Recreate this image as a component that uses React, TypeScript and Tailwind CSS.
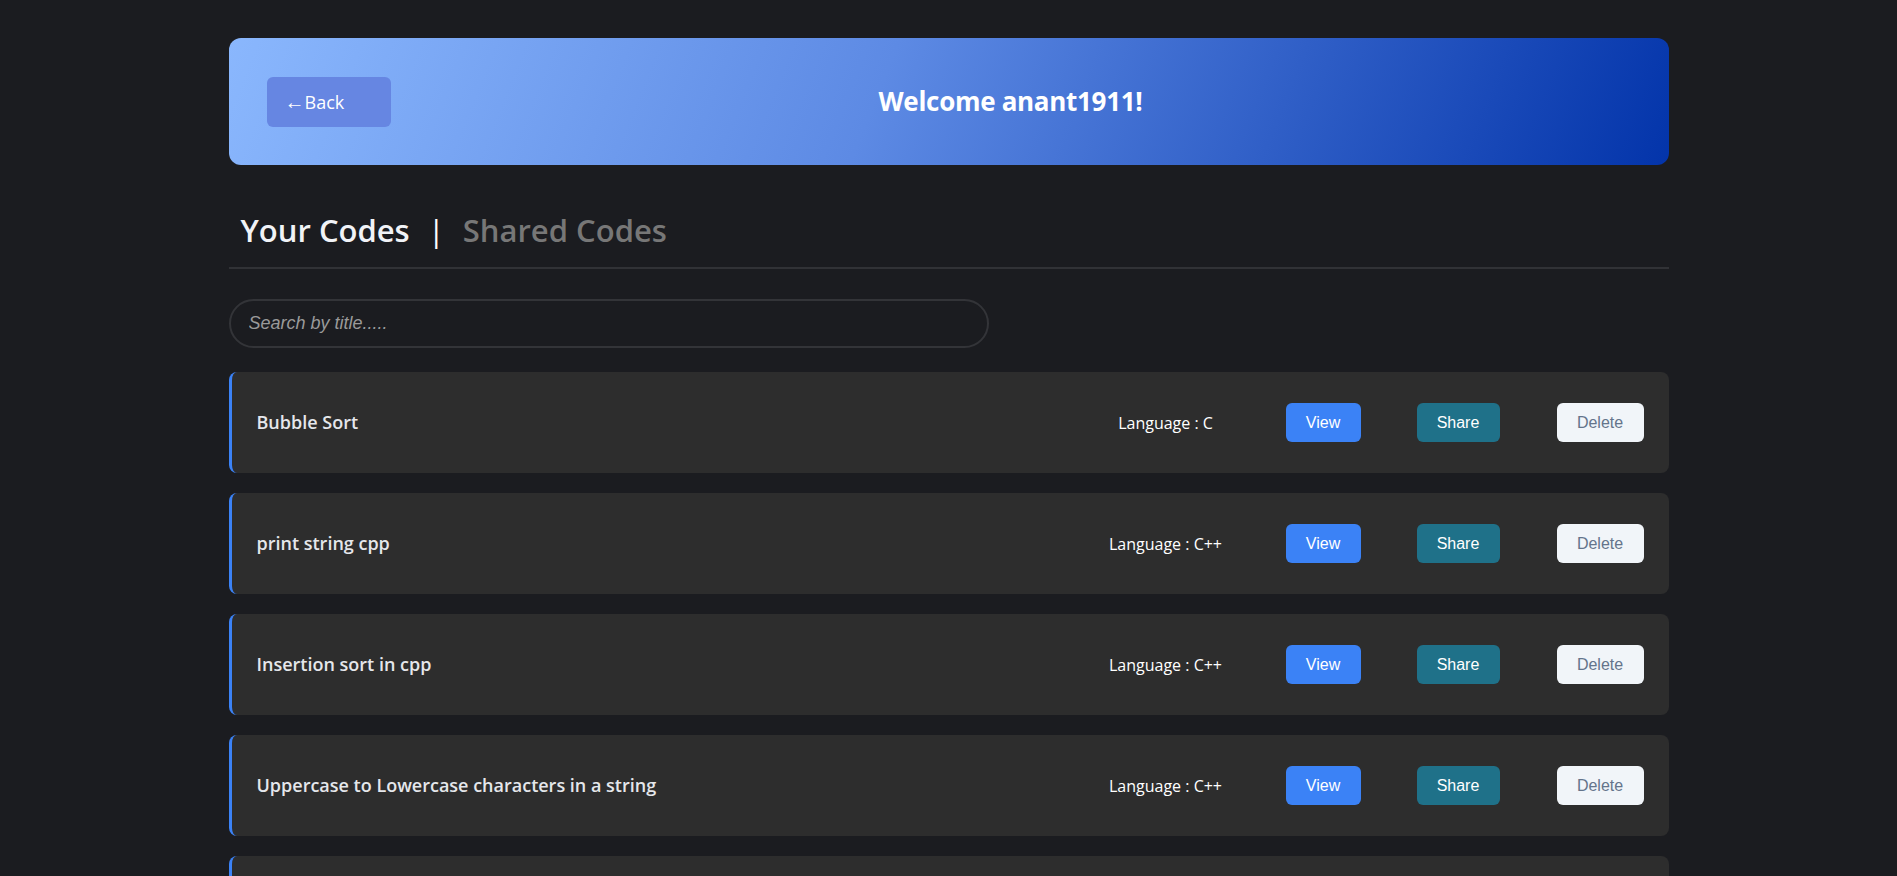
import React from 'react';

type CodeItem = {
  id: number;
  title: string;
  language: string;
};

const codes: CodeItem[] = [
  { id: 1, title: 'Bubble Sort', language: 'C' },
  { id: 2, title: 'print string cpp', language: 'C++' },
  { id: 3, title: 'Insertion sort in cpp', language: 'C++' },
  { id: 4, title: 'Uppercase to Lowercase characters in a string', language: 'C++' },
  { id: 5, title: 'Binary search', language: 'C++' },
];

function CodeCard({ item }: { item: CodeItem }) {
  return (
    <div className="flex items-center h-[101px] bg-[#2d2d2d] rounded-lg border-l-[3px] border-[#3b82f6] pl-[25px] pr-[25px]">
      <h3 className="flex-1 text-[18px] font-semibold text-[#e5e7eb]">{item.title}</h3>
      <span className="w-[160px] text-center text-[16px] text-white">Language : {item.language}</span>
      <button className="ml-[40px] h-[39px] w-[75px] rounded-md bg-[#3b82f6] text-white text-[16px] font-['Liberation_Sans',Arial,sans-serif]">
        View
      </button>
      <button className="ml-[56px] h-[39px] w-[83px] rounded-md bg-[#1f7189] text-white text-[16px] font-['Liberation_Sans',Arial,sans-serif]">
        Share
      </button>
      <button className="ml-[57px] h-[39px] w-[87px] rounded-md bg-[#f1f5f9] text-[#64748b] text-[16px] font-['Liberation_Sans',Arial,sans-serif]">
        Delete
      </button>
    </div>
  );
}

export default function App() {
  return (
    <div className="min-h-screen bg-[#1b1c20] font-['Open_Sans','Noto_Sans',sans-serif]">
      <div className="mx-auto w-[1440px] pt-[38px] pb-10">
        <header className="flex items-center h-[127px] px-[38px] rounded-xl bg-[linear-gradient(112deg,#8ab7fd_0%,#5d8ae4_45%,#0334aa_100%)]">
          <button className="w-[124px] h-[50px] rounded-md bg-[#6686e2] text-left pl-[18px] text-[18px] text-white">
            <span className="text-[20px]">←</span>Back
          </button>
          <h1 className="flex-1 text-center text-[26px] font-bold text-white tracking-[-0.3px]">Welcome anant1911!</h1>
        </header>

        <div className="mt-[41px] flex items-center pl-3 pb-[13px] border-b-2 border-[#313236]">
          <span className="text-[31px] leading-[48px] font-semibold text-[#f1f3f7]">Your Codes</span>
          <span className="mx-[18px] text-[31px] leading-[48px] text-white">|</span>
          <span className="text-[31px] leading-[48px] font-semibold text-[#777777]">Shared Codes</span>
        </div>

        <input
          type="text"
          placeholder="Search by title....."
          className="mt-[30px] block w-[760px] h-[49px] rounded-full border-2 border-[#333438] bg-transparent px-[18px] text-[18px] italic text-white placeholder:text-[#9a9a9a] outline-none font-['Liberation_Sans',Arial,sans-serif]"
        />

        <div className="mt-[24px] flex flex-col gap-[20px]">
          {codes.map(item => (
            <CodeCard key={item.id} item={item} />
          ))}
        </div>
      </div>
    </div>
  );
}
